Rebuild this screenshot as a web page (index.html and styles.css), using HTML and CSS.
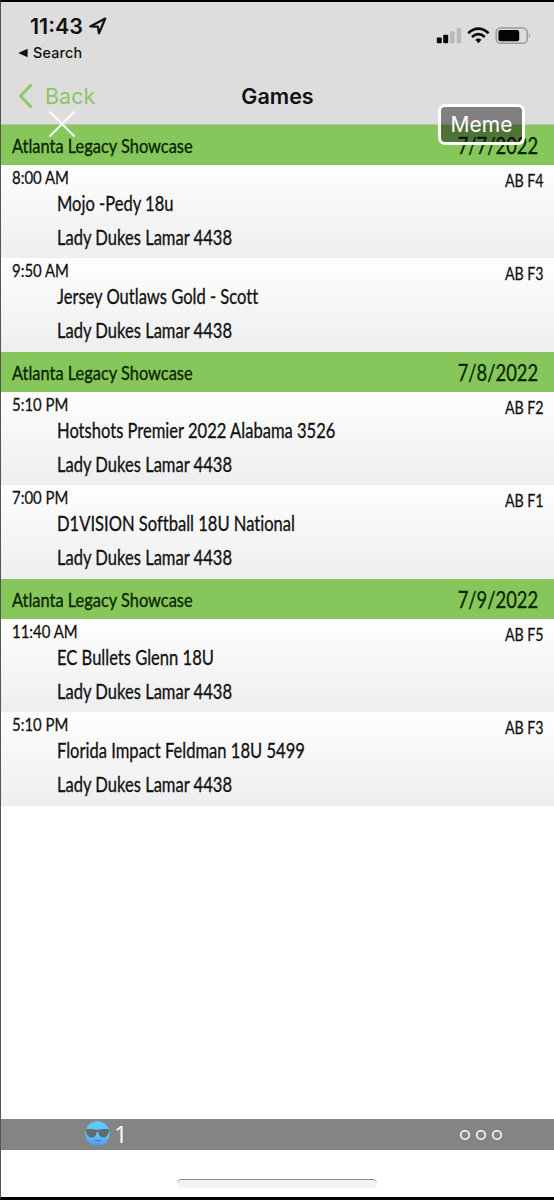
FILE: index.html
```html
<!DOCTYPE html>
<html lang="en">
<head>
  <meta charset="UTF-8">
  <meta name="viewport" content="width=device-width, initial-scale=1.0">
  <title>Games</title>
  <link rel="stylesheet" href="styles.css">
</head>
<body>
  <div class="screen">
    <div class="header">
      <div class="status-bar">
        <div class="clock">
          <span class="time-now">11:43</span>
          <svg class="location" width="18" height="18" viewBox="0 0 18 18"><path d="M1.2 9.4 L16.2 1.6 L10 16.2 L8.9 9.6 Z" fill="none" stroke="#111" stroke-width="2.3" stroke-linejoin="round"/></svg>
        </div>
        <svg class="status-icons" width="96" height="20" viewBox="0 0 96 20">
          <g fill="#0a0a0a">
            <rect x="0.8" y="11.4" width="5" height="5.8" rx="1"/>
            <rect x="7.2" y="8.8" width="5" height="8.4" rx="1"/>
          </g>
          <g fill="#b9b9b9">
            <rect x="14" y="5.2" width="4.6" height="12" rx="1"/>
            <rect x="20.6" y="2" width="4.6" height="15.2" rx="1"/>
          </g>
          <g fill="none" stroke="#0a0a0a" stroke-width="2.7">
            <path d="M32.2 7.3 Q42.4 -1.9 52.6 7.3"/>
            <path d="M36 11 Q42.4 5.4 48.8 11"/>
          </g>
          <path d="M39.3 13.7 Q42.4 11.4 45.5 13.7 L42.4 17.2 Z" fill="#0a0a0a"/>
          <rect x="60.2" y="1.9" width="31" height="15.4" rx="4.4" fill="none" stroke="#999" stroke-width="1.5"/>
          <rect x="62.4" y="4" width="20.8" height="11.2" rx="2" fill="#050505"/>
          <path d="M92.8 7.2 Q95.4 9.5 92.8 11.8 Z" fill="#999"/>
        </svg>
      </div>
      <div class="back-app">
        <svg width="10" height="10" viewBox="0 0 10 10"><path d="M0.3 5 L9.6 0.7 V9.3 Z" fill="#111"/></svg>
        <span>Search</span>
      </div>
      <div class="nav">
        <div class="back">
          <svg width="16" height="26" viewBox="0 0 16 26"><path d="M13.6 1.6 L2.4 13 L13.6 24.4" fill="none" stroke="#8cc665" stroke-width="2.8"/></svg>
          <span>Back</span>
        </div>
        <div class="title">Games</div>
      </div>
    </div>

    <div class="games">
      <div class="day"><span class="event">Atlanta Legacy Showcase</span><span class="date">7/7/2022</span></div>
      <div class="game">
        <div class="slot"><span class="time">8:00 AM</span><span class="field">AB F4</span></div>
        <div class="team"><span>Mojo -Pedy 18u</span></div>
        <div class="team"><span>Lady Dukes Lamar 4438</span></div>
      </div>
      <div class="game">
        <div class="slot"><span class="time">9:50 AM</span><span class="field">AB F3</span></div>
        <div class="team"><span>Jersey Outlaws Gold - Scott</span></div>
        <div class="team"><span>Lady Dukes Lamar 4438</span></div>
      </div>
      <div class="day"><span class="event">Atlanta Legacy Showcase</span><span class="date">7/8/2022</span></div>
      <div class="game">
        <div class="slot"><span class="time">5:10 PM</span><span class="field">AB F2</span></div>
        <div class="team"><span>Hotshots Premier 2022 Alabama 3526</span></div>
        <div class="team"><span>Lady Dukes Lamar 4438</span></div>
      </div>
      <div class="game">
        <div class="slot"><span class="time">7:00 PM</span><span class="field">AB F1</span></div>
        <div class="team"><span>D1VISION Softball 18U National</span></div>
        <div class="team"><span>Lady Dukes Lamar 4438</span></div>
      </div>
      <div class="day"><span class="event">Atlanta Legacy Showcase</span><span class="date">7/9/2022</span></div>
      <div class="game">
        <div class="slot"><span class="time">11:40 AM</span><span class="field">AB F5</span></div>
        <div class="team"><span>EC Bullets Glenn 18U</span></div>
        <div class="team"><span>Lady Dukes Lamar 4438</span></div>
      </div>
      <div class="game">
        <div class="slot"><span class="time">5:10 PM</span><span class="field">AB F3</span></div>
        <div class="team"><span>Florida Impact Feldman 18U 5499</span></div>
        <div class="team"><span>Lady Dukes Lamar 4438</span></div>
      </div>
    </div>

    <div class="reaction-bar">
      <div class="reaction">
        <svg width="25" height="25" viewBox="0 0 25 25">
          <defs>
            <linearGradient id="face" x1="0" y1="0" x2="0" y2="1">
              <stop offset="0" stop-color="#62c9fb"/>
              <stop offset="0.55" stop-color="#5cc4fa"/>
              <stop offset="1" stop-color="#5795ee"/>
            </linearGradient>
          </defs>
          <circle cx="12.5" cy="12.5" r="12.2" fill="url(#face)"/>
          <path d="M0.8 8.2 Q6.5 7.4 12.5 9 Q18.5 7.4 24.2 8.2 L23.8 10.8 Q22.8 16.8 18.2 16.6 Q14.2 16.4 13.4 11.4 L12.5 10.6 L11.6 11.4 Q10.8 16.4 6.8 16.6 Q2.2 16.8 1.2 10.8 Z" fill="#626b70"/>
          <path d="M9.6 19.2 Q13 20.4 16 19" fill="none" stroke="#397fae" stroke-width="1"/>
        </svg>
        <span>1</span>
      </div>
      <svg class="more" width="44" height="12" viewBox="0 0 44 12">
        <g fill="none" stroke="#fff" stroke-width="1.6">
          <circle cx="6" cy="6" r="4.2"/><circle cx="22" cy="6" r="4.2"/><circle cx="38" cy="6" r="4.2"/>
        </g>
      </svg>
    </div>
    <div class="home-indicator"></div>

    <!-- viewer controls on top of the photo -->
    <svg class="close" width="28" height="28" viewBox="0 0 28 28"><path d="M1.5 1.5 L26.5 26.5 M26.5 1.5 L1.5 26.5" stroke="#fff" stroke-width="2"/></svg>
    <div class="meme">Meme</div>
  </div>
</body>
</html>
```
FILE: styles.css
```css
* {
    box-sizing: border-box;
}
body {
    margin: 0;
    font-family: Inter, "Liberation Sans", sans-serif;
    color: #111;
}
.screen {
    position: relative;
    display: flex;
    flex-direction: column;
    width: 554px;
    height: 1200px;
    background: #fff;
    border-top: 2px solid #000;
    border-bottom: 3px solid #000;
    border-left: 1px solid #555;
    overflow: hidden;
}
.header {
    height: 123px;
    background: #dddddd;
    border-bottom: 1px solid #bdc4b8;
}
.status-bar {
    display: flex;
    justify-content: space-between;
    height: 42px;
    padding: 10px 22px 0 29px;
}
.clock {
    display: flex;
    gap: 6px;
    height: 28px;
    align-items: center;
}
.time-now {
    font-size: 21.5px;
    font-weight: 600;
}
.status-icons {
    margin-top: 14px;
}
.back-app {
    display: flex;
    align-items: center;
    gap: 5px;
    height: 17px;
    padding-left: 17px;
    font-size: 14.3px;
    font-weight: 500;
    letter-spacing: 0.2px;
}
.nav {
    display: grid;
    grid-template-columns: 1fr auto 1fr;
    align-items: center;
    height: 34px;
    margin-top: 18px;
}
.back {
    display: flex;
    align-items: center;
    gap: 11px;
    padding-left: 17px;
    font-size: 21.5px;
    color: #8cc665;
}
.title {
    font-size: 21.5px;
    font-weight: 600;
}
.games {
    font-family: Lato, "Liberation Sans", sans-serif;
    font-variant-ligatures: none;
    white-space: nowrap;
    -webkit-text-stroke: 0.3px;
}
/* condensed lettering */
.games span {
    display: inline-block;
    transform: scaleX(0.82);
    transform-origin: left;
}
.day {
    display: flex;
    justify-content: space-between;
    align-items: center;
    height: 40px;
    padding: 0 16px 0 11px;
    background: #87c65a;
    color: #062500;
}
.event {
    font-size: 20px;
}
.date {
    font-size: 23.5px;
}
.games .date,
.games .field {
    transform: scaleX(0.78);
    transform-origin: right;
}
.game {
    height: 93px;
    background: linear-gradient(#fefefe, #eeeeef);
}
.game + .game {
    height: 94px;
}
.slot {
    display: flex;
    justify-content: space-between;
    height: 22px;
    padding: 1px 10px 0 11px;
    font-size: 18.2px;
    line-height: 22px;
}
.field {
    padding-top: 3px;
}
.team {
    height: 33.5px;
    padding-left: 56px;
    font-size: 20.2px;
    line-height: 33px;
}
.reaction-bar {
    display: flex;
    justify-content: space-between;
    align-items: center;
    height: 31px;
    margin-top: auto;
    padding: 0 51px 0 84px;
    background: #848484;
}
.reaction {
    display: flex;
    align-items: center;
    gap: 4px;
    color: #fff;
    font-family: "Open Sans", sans-serif;
    font-size: 24px;
    line-height: 29px;
}
.reaction svg {
    margin-top: -2px;
}
.reaction span {
    margin-top: -2px;
}
.home-indicator {
    width: 200px;
    height: 9px;
    margin: 29px 0 9px 176px;
    border-top: 1px solid #888;
    border-radius: 5px;
    background: #f3f3f3;
}
.close {
    position: absolute;
    left: 47px;
    top: 108px;
}
.meme {
    position: absolute;
    left: 437px;
    top: 102px;
    width: 87px;
    height: 41px;
    border: 3px solid #fff;
    border-radius: 7px;
    background: rgba(0, 0, 0, 0.42);
    color: #fff;
    font-size: 21px;
    line-height: 35px;
    text-align: center;
}
```
